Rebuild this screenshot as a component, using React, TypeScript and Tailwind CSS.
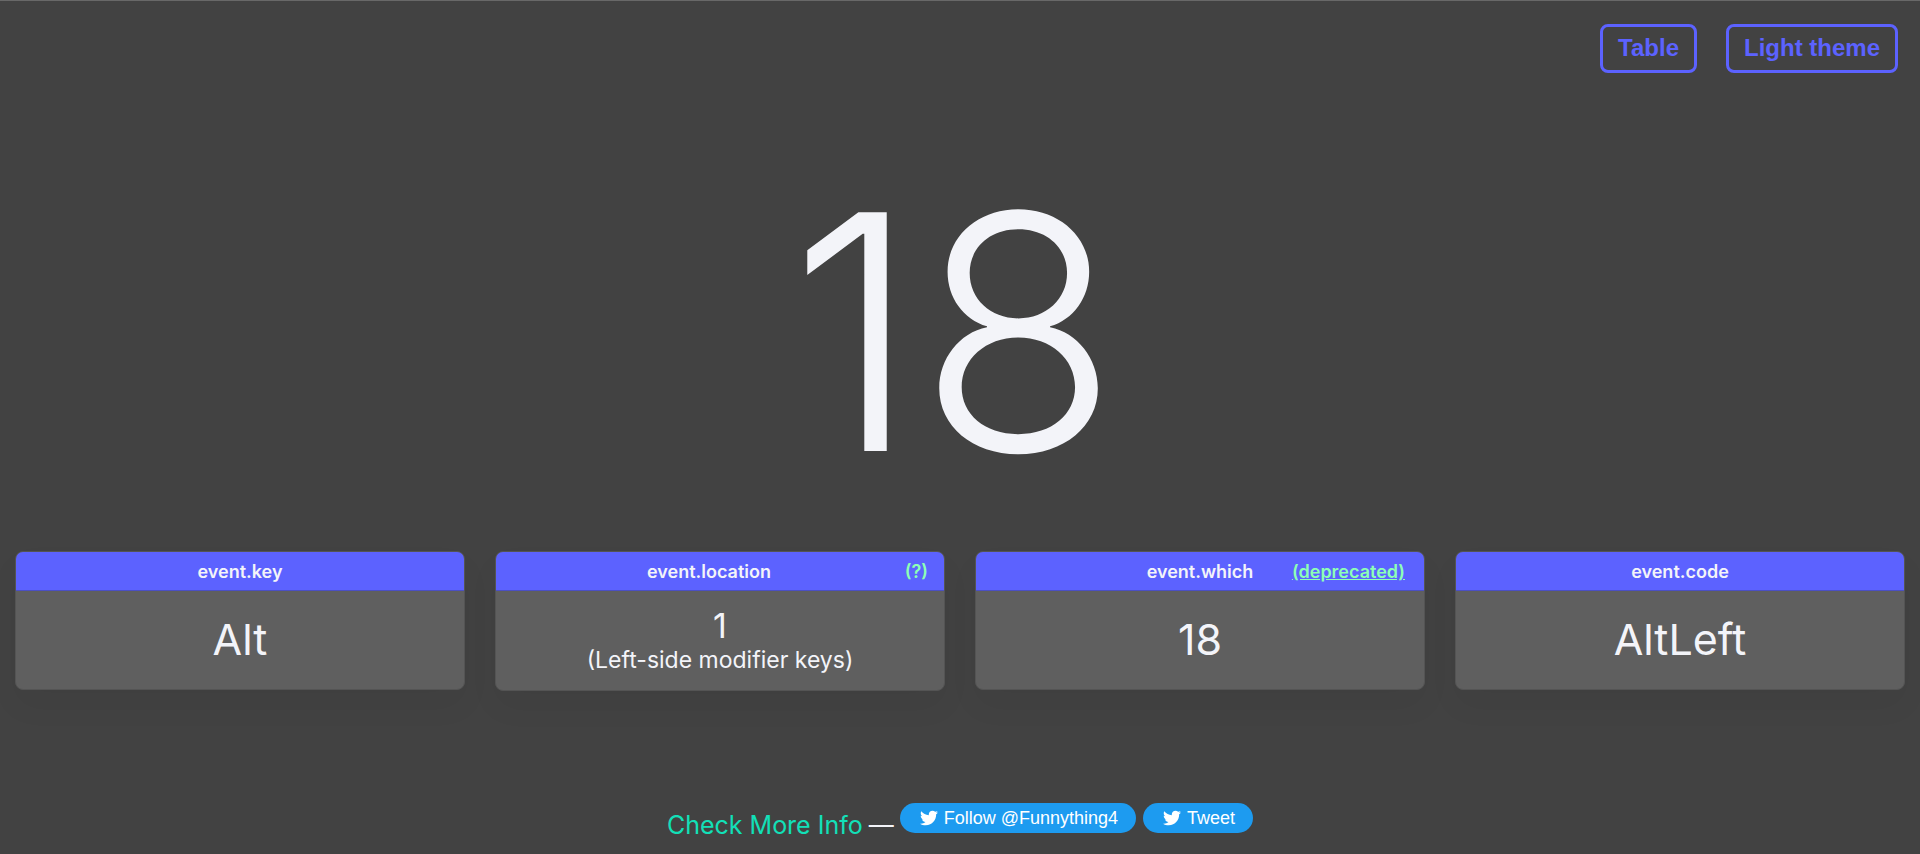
import type { ReactNode } from "react";
import { FaTwitter } from "react-icons/fa";

function ThemeButton({ children }: { children: ReactNode }) {
  return (
    <button
      type="button"
      className="rounded-lg border-3 border-[#5c62ff] px-[15px] pt-[7px] pb-[9px] font-['Liberation_Sans',sans-serif] text-2xl/[27px] font-bold text-[#5c62ff]"
    >
      {children}
    </button>
  );
}

function Card({ title, note, children }: { title: ReactNode; note?: ReactNode; children: ReactNode }) {
  return (
    <section className="rounded-lg border border-[#545454] bg-[#5f5f5f] shadow-[0_16px_32px_rgba(0,0,0,0.04)]">
      <header className="relative rounded-t-[7px] border-b border-[#4b4fc4] bg-[#5c62ff] pt-[7px] pb-[5px] text-center text-lg/[26px] font-semibold">
        <h2>{title}</h2>
        {note}
      </header>
      {children}
    </section>
  );
}

function Value({ children }: { children: ReactNode }) {
  return <p className="pt-[23px] pb-[25px] text-center text-[43px]/[50px]">{children}</p>;
}

function TweetLink({ children }: { children: ReactNode }) {
  return (
    <a
      href="#"
      className="flex h-[30px] items-center gap-1.5 rounded-full bg-[#1d9bf0] pr-[18px] pl-5 font-['Liberation_Sans',sans-serif] text-lg/[30px] text-white"
    >
      <FaTwitter className="size-[18px]" aria-hidden="true" />
      {children}
    </a>
  );
}

export default function App() {
  return (
    <div className="flex min-h-screen flex-col border-t border-[#686868] bg-[#424242] font-[Inter,sans-serif] text-[#f3f4f9]">
      <nav className="flex justify-end gap-[29px] px-[22px] pt-[23px]">
        <ThemeButton>Table</ThemeButton>
        <ThemeButton>Light theme</ThemeButton>
      </nav>

      <h1 className="pt-[59px] pr-3 text-center text-[328px]/[400px] font-[350]">18</h1>

      <main className="grid grid-cols-4 items-start gap-[30px] px-[15px] pt-[19px]">
        <Card title="event.key">
          <Value>Alt</Value>
        </Card>
        <Card
          title={<span className="pr-[22px]">event.location</span>}
          note={
            <button type="button" className="absolute top-[7px] right-4 text-[#8dffb5]">
              (?)
            </button>
          }
        >
          <div className="pt-4 pb-[15px] text-center">
            <p className="text-[34px]/[38px]">1</p>
            <p className="text-[23px]/[30px]">(Left-side modifier keys)</p>
          </div>
        </Card>
        <Card
          title="event.which"
          note={
            <a href="#" className="absolute top-[7px] right-[19px] text-[#8dffb5] underline">
              (deprecated)
            </a>
          }
        >
          <Value>18</Value>
        </Card>
        <Card title="event.code">
          <Value>AltLeft</Value>
        </Card>
      </main>

      <footer className="mt-auto flex items-end justify-center gap-1.5 pb-[13px] text-[25px]/8">
        <a href="#" className="text-[#12e0b8]">
          Check More Info
        </a>
        <span>—</span>
        <div className="flex items-center gap-[7px] pb-2">
          <TweetLink>Follow @Funnything4</TweetLink>
          <TweetLink>Tweet</TweetLink>
        </div>
      </footer>
    </div>
  );
}
